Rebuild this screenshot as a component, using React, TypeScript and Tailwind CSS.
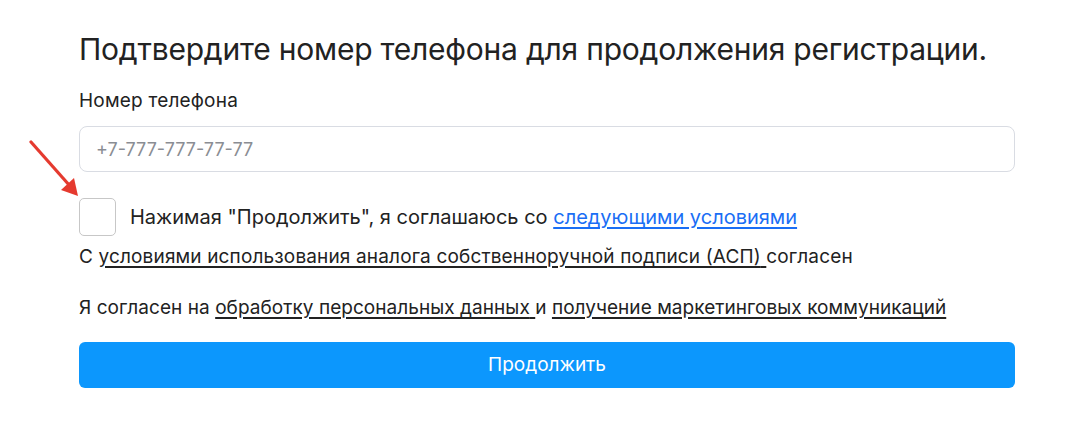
export default function App() {
  return (
    <div className="relative min-h-[428px] bg-white font-['Inter',sans-serif] text-[#222]">
      {/* red annotation arrow */}
      <svg className="absolute left-[28px] top-[140px]" width="56" height="60" viewBox="0 0 56 60">
        <line x1="3" y1="2" x2="42" y2="46" stroke="#e53a2f" strokeWidth="3.2" strokeLinecap="round" />
        <polygon points="50,56 33,50 46,38" fill="#e53a2f" />
      </svg>

      <div className="px-[79px] pt-[31px] w-[1094px]">
        <h1 className="text-[30px] leading-[36px] font-normal tracking-[-0.22px]">
          Подтвердите номер телефона для продолжения регистрации.
        </h1>

        <label className="block mt-[22px] text-[19px] leading-[24px] tracking-[0.2px]">Номер телефона</label>

        <input
          className="mt-[13px] block w-[936px] h-[46px] rounded-[8px] border border-[#d9dce3] px-[16px] text-[18px] placeholder:text-[#8a8d93] outline-none"
          placeholder="+7-777-777-77-77"
        />

        <div className="mt-[26px] flex items-center gap-[14px]">
          <div className="w-[37px] h-[38px] rounded-[5px] border border-[#c7c7c7]" />
          <p className="text-[20px] leading-[24px]">
            Нажимая "Продолжить", я соглашаюсь со{" "}
            <a className="text-[#1a6ef5] underline decoration-[1.5px] underline-offset-[3px]" href="#">
              следующими условиями
            </a>
          </p>
        </div>

        <p className="mt-[9px] text-[19px] leading-[24px] tracking-[0.15px]">
          С{" "}
          <a className="underline decoration-[1.5px] underline-offset-[3px]" href="#">
            условиями использования аналога собственноручной подписи (АСП){" "}
          </a>
          согласен
        </p>

        <p className="mt-[27px] text-[19px] leading-[24px] tracking-[0.05px]">
          Я согласен на{" "}
          <a className="underline decoration-[1.5px] underline-offset-[3px]" href="#">
            обработку персональных данных{" "}
          </a>
          и{" "}
          <a className="underline decoration-[1.5px] underline-offset-[3px]" href="#">
            получение маркетинговых коммуникаций
          </a>
        </p>

        <button className="mt-[22px] w-[936px] h-[46px] rounded-[6px] bg-[#0c97fd] text-white text-[19px]">
          Продолжить
        </button>
      </div>
    </div>
  );
}
